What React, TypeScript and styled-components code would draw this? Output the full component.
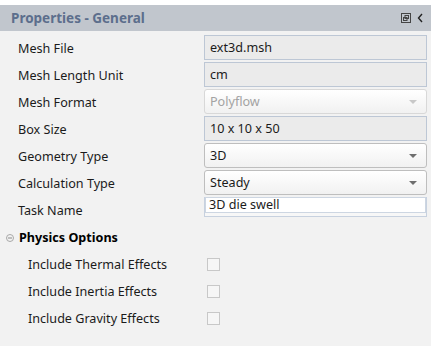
import styled, { createGlobalStyle } from "styled-components"

const GlobalStyle = createGlobalStyle`
  html, body {
    margin: 0;
    padding: 0;
    background: #ffffff;
  }
  body {
    font-family: "Noto Sans", "Open Sans", sans-serif;
    font-size: 12.6px;
    color: #1b1b1b;
  }
`

const Panel = styled.div`
  width: 431px;
  height: 346px;
  padding-top: 5px;
  box-sizing: border-box;
  display: flex;
  flex-direction: column;
`

const Header = styled.div`
  height: 26px;
  background: #c1c6cd;
  display: flex;
  align-items: center;
  padding: 0 8px 0 11px;
`

const Title = styled.span`
  flex: 1;
  font-weight: bold;
  font-size: 13.5px;
  color: #5c6e8c;
`

const HeaderIcons = styled.div`
  display: flex;
  align-items: center;
  gap: 6px;
  color: #333;
`

const Body = styled.div`
  flex: 1;
  background: #f2f2f2;
  padding: 4px 4px 0 0;
`

const Row = styled.div`
  height: 27px;
  display: grid;
  grid-template-columns: 204px 1fr;
  align-items: start;
`

const Label = styled.div<{ $indent?: number }>`
  padding: 1px 0 0 ${({ $indent }) => $indent ?? 18}px;
  line-height: 25px;
  white-space: nowrap;
`

const ReadOnly = styled.div`
  height: 25px;
  box-sizing: border-box;
  background: #ebebeb;
  border: 1px solid #bdc7d5;
  padding-left: 5px;
  line-height: 23px;
`

const Combo = styled.div<{ $disabled?: boolean }>`
  height: 25px;
  box-sizing: border-box;
  background: linear-gradient(#ffffff, #f1f1f1);
  border: 1px solid ${({ $disabled }) => ($disabled ? "#d8d8d8" : "#bebebe")};
  border-radius: 3px;
  padding: 0 9px 0 5px;
  display: flex;
  align-items: center;
  color: ${({ $disabled }) => ($disabled ? "#a3a3a3" : "#1b1b1b")};
`

const ComboText = styled.span`
  flex: 1;
`

const Arrow = styled.span<{ $disabled?: boolean }>`
  width: 0;
  height: 0;
  border-left: 4px solid transparent;
  border-right: 4px solid transparent;
  border-top: 4px solid ${({ $disabled }) => ($disabled ? "#c8c8c8" : "#6e6e6e")};
`

const TextFrame = styled.div`
  height: 20px;
  box-sizing: border-box;
  border: 1px solid #c7d1df;
  border-top: none;
  background: #f7f7f7;
`

const TextInput = styled.div`
  height: 16px;
  box-sizing: border-box;
  background: #ffffff;
  border: 1px solid #cdd6e2;
  padding-left: 3px;
  line-height: 14px;
`

const Section = styled.div`
  height: 27px;
  display: flex;
  align-items: center;
  gap: 5px;
  padding-left: 6px;
  font-weight: bold;
  color: #000;
`

const CheckCell = styled.div`
  height: 25px;
  display: flex;
  align-items: center;
  padding: 1px 0 0 3px;
`

const Box = styled.div`
  width: 13px;
  height: 13px;
  box-sizing: border-box;
  border: 1px solid #c8c8c8;
  background: #f6f6f6;
`

const fields: { label: string; kind: "ro" | "combo" | "disabled" | "text"; value: string }[] = [
  { label: "Mesh File", kind: "ro", value: "ext3d.msh" },
  { label: "Mesh Length Unit", kind: "ro", value: "cm" },
  { label: "Mesh Format", kind: "disabled", value: "Polyflow" },
  { label: "Box Size", kind: "ro", value: "10 x 10 x 50" },
  { label: "Geometry Type", kind: "combo", value: "3D" },
  { label: "Calculation Type", kind: "combo", value: "Steady" },
  { label: "Task Name", kind: "text", value: "3D die swell" },
]

const checks = ["Include Thermal Effects", "Include Inertia Effects", "Include Gravity Effects"]

const Field = ({ kind, value }: { kind: string; value: string }) => {
  if (kind === "ro") return <ReadOnly>{value}</ReadOnly>
  if (kind === "text")
    return (
      <TextFrame>
        <TextInput>{value}</TextInput>
      </TextFrame>
    )
  const disabled = kind === "disabled"
  return (
    <Combo $disabled={disabled}>
      <ComboText>{value}</ComboText>
      <Arrow $disabled={disabled} />
    </Combo>
  )
}

const App = () => (
  <>
    <GlobalStyle />
    <Panel>
      <Header>
        <Title>Properties - General</Title>
        <HeaderIcons>
          <svg width="10" height="10" viewBox="0 0 10 10">
            <rect x="0.5" y="0.5" width="9" height="9" fill="none" stroke="#444" />
            <rect x="2.5" y="4.5" width="3.5" height="3" fill="none" stroke="#444" />
            <rect x="4" y="2.5" width="3.5" height="3" fill="none" stroke="#444" />
          </svg>
          <svg width="6" height="10" viewBox="0 0 6 10">
            <path d="M5 1 L1.5 5 L5 9" fill="none" stroke="#222" strokeWidth="1.4" />
          </svg>
        </HeaderIcons>
      </Header>
      <Body>
        {fields.map(f => (
          <Row key={f.label}>
            <Label>{f.label}</Label>
            <Field kind={f.kind} value={f.value} />
          </Row>
        ))}
        <Section>
          <svg width="8" height="8" viewBox="0 0 8 8">
            <circle cx="4" cy="4" r="3.5" fill="#f2f2f2" stroke="#a8a8a8" />
            <line x1="2" y1="4" x2="6" y2="4" stroke="#8a8a8a" />
          </svg>
          Physics Options
        </Section>
        {checks.map(c => (
          <Row key={c}>
            <Label $indent={28}>{c}</Label>
            <CheckCell>
              <Box />
            </CheckCell>
          </Row>
        ))}
      </Body>
    </Panel>
  </>
)

export default App
